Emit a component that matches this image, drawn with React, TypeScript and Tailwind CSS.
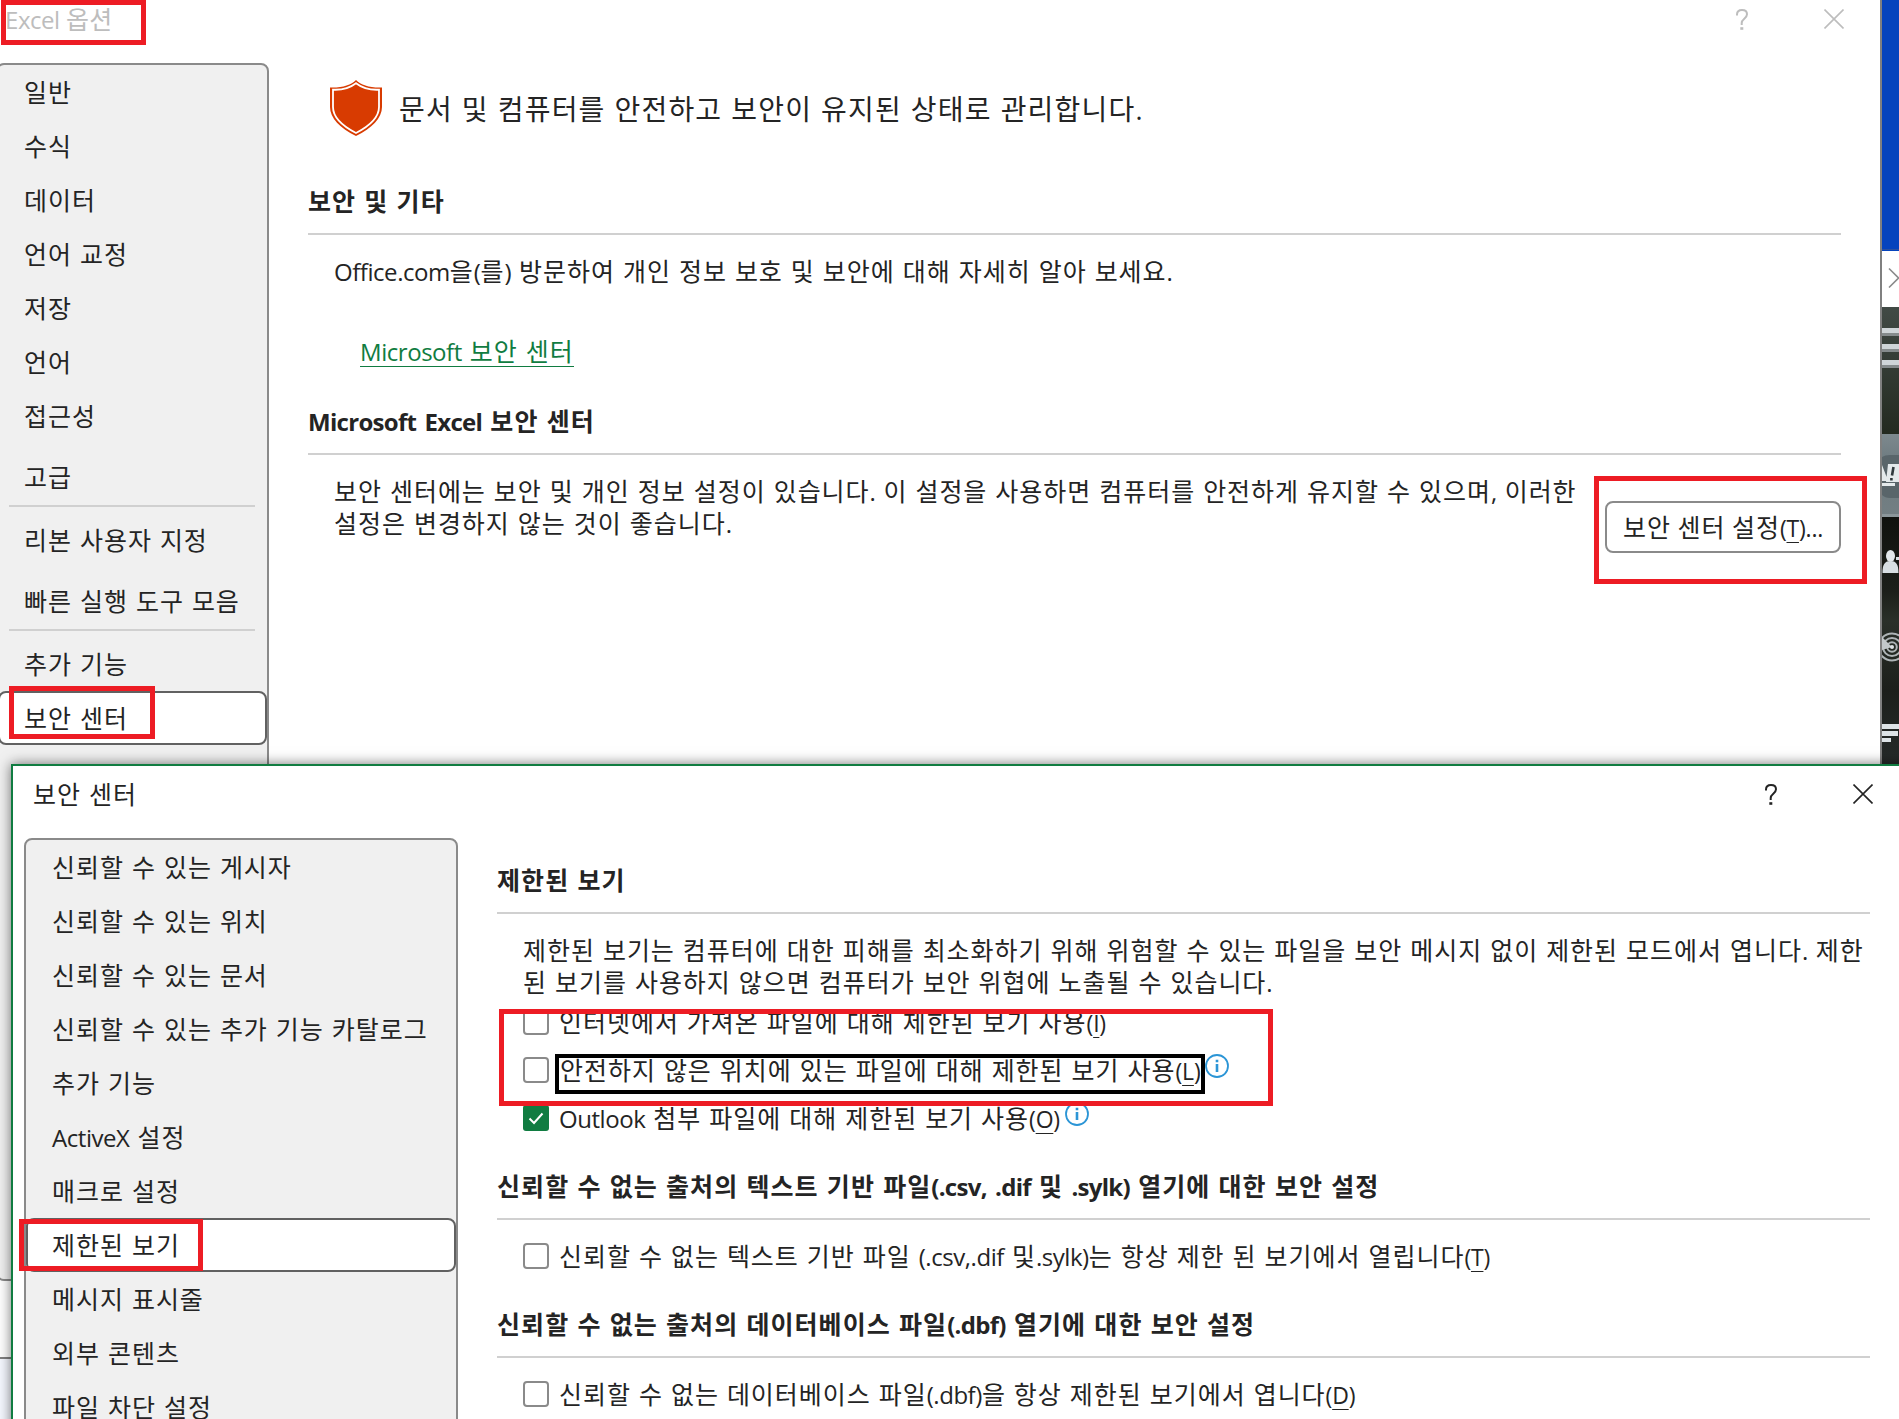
import React from "react"
import clsx from "clsx"

const LATIN_RUN = /([A-Za-z0-9.,()?]+)/

/**
 * T - Splits mixed text so latin runs use their own face and tracking
 */
const T: React.FC<{ children: string; bold?: boolean }> = ({ children, bold }) => (
	<>
		{children.split(LATIN_RUN).map((part, i) =>
			i % 2 === 1 ? (
				<span
					key={i}
					className={clsx(
						"font-['Open_Sans',sans-serif] text-[0.96em] leading-none",
						bold ? "tracking-[-0.7px]" : "tracking-[-0.45px]",
					)}>
					{part}
				</span>
			) : (
				part
			),
		)}
	</>
)

/** Access key such as (T), with the letter underlined */
const AccessKey: React.FC<{ letter: string; suffix?: string }> = ({ letter, suffix = "" }) => (
	<span className="font-['Open_Sans',sans-serif] text-[23px] leading-none tracking-[-0.2px]">
		(<span className="underline decoration-1 underline-offset-[5px]">{letter}</span>){suffix}
	</span>
)

const CloseIcon: React.FC<{ className?: string }> = ({ className }) => (
	<svg viewBox="0 0 20 20" className={clsx("h-5 w-5", className)} fill="none" stroke="currentColor" strokeWidth="1.6">
		<path d="M0.5 0.5 19.5 19.5M19.5 0.5 0.5 19.5" />
	</svg>
)

const HelpIcon: React.FC<{ className?: string }> = ({ className }) => (
	<svg viewBox="0 0 12 21" className={clsx("h-[21px] w-3", className)} fill="none" stroke="currentColor" strokeWidth="2">
		<path d="M1 6.500V5.500C1 2.500 3.200 1 6 1S11 2.500 11 5.300C11 9.500 5.700 10 5.700 14V16" />
		<path d="M4.300 19.500H7.300" strokeWidth="2.600" />
	</svg>
)

const ShieldIcon = () => (
	<svg viewBox="0 0 52 56" className="h-14 w-[52px]">
		<path d="M26 0C31 5 40 8 52 7.500V27C52 38 42 48 26 56C10 48 0 38 0 27V7.500C12 8 21 5 26 0Z" fill="#d83b01" />
		<path
			d="M26 3.200C32 7.800 40 10.200 49 9.700V27C49 36 40.500 45.500 26 53C11.500 45.500 3 36 3 27V9.700C12 10.200 20 7.800 26 3.200Z"
			fill="none"
			stroke="#fff"
			strokeWidth="1.800"
		/>
	</svg>
)

const InfoIcon = () => (
	<svg viewBox="0 0 24 24" className="h-6 w-6" fill="none" stroke="#2b95d6">
		<circle cx="12" cy="12" r="11" strokeWidth="1.800" />
		<path d="M12 10V18M12 5.800V8.200" strokeWidth="2.600" />
	</svg>
)

const CheckBox: React.FC<{ checked?: boolean }> = ({ checked }) =>
	checked ? (
		<svg viewBox="0 0 26 26" className="h-[26px] w-[26px] shrink-0">
			<rect width="26" height="26" rx="3" fill="#107c41" />
			<path d="M6.500 13.500 11 18 19.500 8.500" fill="none" stroke="#fff" strokeWidth="2" />
		</svg>
	) : (
		<span className="h-[26px] w-[26px] shrink-0 rounded-[4px] border-2 border-[#8a8a8a] bg-white" />
	)

const NavItem: React.FC<{ label: string; selected?: boolean; className?: string }> = ({
	label,
	selected,
	className,
}) => (
	<div
		className={clsx(
			"flex h-[54px] shrink-0 items-center whitespace-pre pb-px",
			selected ? "rounded-[8px] border-2 border-[#616161] bg-white" : "border-2 border-transparent",
			className,
		)}>
		<span>
			<T>{label}</T>
		</span>
	</div>
)

const SectionTitle: React.FC<{ children: string }> = ({ children }) => (
	<div className="h-[50px] border-b-2 border-[#d0d0d0] font-bold leading-[30px] tracking-[1.07px]">
		<T bold>{children}</T>
	</div>
)

const Marker: React.FC<{ className: string }> = ({ className }) => (
	<div className={clsx("pointer-events-none absolute border-[5px] border-[#ed1c24]", className)} />
)

/** Sliver of the desktop that shows to the right of the options window */
const DesktopEdge = () => (
	<svg viewBox="0 0 17 764" className="h-[764px] w-[17px] shrink-0">
		<defs>
			<linearGradient id="hill" x1="0" y1="0" x2="0" y2="1">
				<stop offset="0" stopColor="#414a45" />
				<stop offset="0.45" stopColor="#343c35" />
				<stop offset="1" stopColor="#232a20" />
			</linearGradient>
			<linearGradient id="band" x1="0" y1="0" x2="0" y2="1">
				<stop offset="0" stopColor="#7d898e" />
				<stop offset="0.35" stopColor="#6d7a7f" />
				<stop offset="1" stopColor="#737f83" />
			</linearGradient>
			<linearGradient id="ground" x1="0" y1="0" x2="0" y2="1">
				<stop offset="0" stopColor="#10120e" />
				<stop offset="0.3" stopColor="#1c1f1a" />
				<stop offset="0.42" stopColor="#2a3029" />
				<stop offset="0.7" stopColor="#1c1f1b" />
				<stop offset="1" stopColor="#252a29" />
			</linearGradient>
		</defs>
		<rect width="17" height="251" fill="#0543bd" />
		<rect y="249" width="17" height="1" fill="#2b50a0" />
		<rect y="251" width="17" height="56" fill="#fff" />
		<path d="M7 268.500 16.500 278 7 287.500" fill="none" stroke="#8a8a8a" strokeWidth="1.600" />
		<rect y="307" width="17" height="127" fill="url(#hill)" />
		{[328, 344, 360].map((y) => (
			<g key={y}>
				<rect y={y} width="17" height="5" fill="#cfd5d8" />
				<rect y={y + 5} width="17" height="3" fill="#858b8c" />
			</g>
		))}
		<rect y="434" width="17" height="83" fill="url(#band)" />
		<path d="M0 457Q3 455 8 455H17V498H8Q3 498 0 495Z" fill="#59656a" />
		<path d="M0 465 5 478V481H0ZM6 464H17V482H4Z" fill="#e4e9eb" />
		<path d="M0 483H13V486H0Z" fill="#e4e9eb" />
		<path d="M11.500 467 10 475.500M9.400 478V480.500" stroke="#30393d" strokeWidth="2.600" />
		<rect y="514" width="17" height="3" fill="#8b969a" />
		<rect y="517" width="17" height="247" fill="url(#ground)" />
		<ellipse cx="8.500" cy="556" rx="4.500" ry="6" fill="#e2e7ea" />
		<path d="M0.500 573C0.500 564 3 561 8.500 561S16.500 564 16.500 573ZM14 557H17V560H14Z" fill="#d8dfe3" />
		<g fill="none" stroke="#aeb4b6" strokeWidth="2">
			<circle cx="10" cy="647" r="13.500" />
			<circle cx="10" cy="647" r="9" />
			<circle cx="10" cy="647" r="4.800" />
		</g>
		<path d="M10 647 0 637V650Z" fill="#c3c9cb" />
		<circle cx="10" cy="647" r="2" fill="#dde2e4" />
		<path d="M0 724H17V729H0ZM0 731H16V736H0ZM0 738H9V742H0Z" fill="#dde3e6" />
	</svg>
)

const ExcelOptions = () => (
	<div className="flex h-[1357px]">
		<div className="flex w-[1882px] shrink-0 flex-col border-r-2 border-[#808080] bg-white">
			<header className="flex h-[63px] shrink-0 items-start justify-between pl-[5px] pr-9 text-[#bdbdbd]">
				<span className="leading-[37px] tracking-[0.2px] [word-spacing:0.5px]">
					<T>Excel 옵션</T>
				</span>
				<div className="flex gap-[76px] pt-[9px]">
					<HelpIcon />
					<CloseIcon />
				</div>
			</header>
			<div className="flex">
				<nav className="-ml-1 flex h-[1218px] w-[273px] shrink-0 flex-col rounded-[8px] border-2 border-[#8a8a8a] bg-[#f0f0f0]">
					{["일반", "수식", "데이터", "언어 교정", "저장", "언어", "접근성"].map((label) => (
						<NavItem key={label} label={label} className="pl-6" />
					))}
					<NavItem label="고급" className="mt-[7px] pl-6" />
					<hr className="ml-[11px] mr-3 mt-px border-t-2 border-[#d0d0d0]" />
					<NavItem label="리본 사용자 지정" className="mt-1.5 pl-6" />
					<NavItem label="빠른 실행 도구 모음" className="mt-[7px] pl-6" />
					<hr className="ml-[11px] mr-3 mt-px border-t-2 border-[#d0d0d0]" />
					<NavItem label="추가 기능" className="mt-1.5 pl-6" />
					<NavItem label="보안 센터" selected className="pl-6" />
				</nav>
				<main className="ml-[39px] flex w-[1533px] shrink-0 flex-col">
					<div className="ml-[22px] mt-[17px] flex h-14 items-center gap-[17px]">
						<ShieldIcon />
						<span className="whitespace-pre text-[28px] leading-[32px] tracking-[1.2px]">
							<T>문서 및 컴퓨터를 안전하고 보안이 유지된 상태로 관리합니다.</T>
						</span>
					</div>
					<div className="mt-[49px]">
						<SectionTitle>보안 및 기타</SectionTitle>
					</div>
					<p className="ml-[26px] mt-[19px] leading-[32px]">
						<T>Office.com을(를) 방문하여 개인 정보 보호 및 보안에 대해 자세히 알아 보세요.</T>
					</p>
					<a className="ml-[52px] mt-[48px] h-[33px] self-start border-b border-[#107c41] leading-[32px] text-[#107c41]">
						<T>Microsoft 보안 센터</T>
					</a>
					<div className="mt-[38px]">
						<SectionTitle>Microsoft Excel 보안 센터</SectionTitle>
					</div>
					<div className="ml-[26px] flex justify-between">
						<p className="mt-[19px] whitespace-pre leading-[32px]">
							<T>보안 센터에는 보안 및 개인 정보 설정이 있습니다. 이 설정을 사용하면 컴퓨터를 안전하게 유지할 수 있으며, 이러한</T>
							<br />
							<T>설정은 변경하지 않는 것이 좋습니다.</T>
						</p>
						<button className="mt-[46px] flex h-[52px] w-[236px] items-center justify-center whitespace-pre rounded-[8px] border-2 border-[#8a8a8a] pb-px">
							<span>
								보안 센터 설정
								<AccessKey letter="T" suffix="..." />
							</span>
						</button>
					</div>
				</main>
			</div>
		</div>
		<DesktopEdge />
	</div>
)

const CheckRow: React.FC<{ label: string; letter: string; checked?: boolean; focused?: boolean; info?: boolean }> = ({
	label,
	letter,
	checked,
	focused,
	info,
}) => (
	<div className="ml-[26px] flex h-12 items-start">
		<CheckBox checked={checked} />
		<span
			className={clsx(
				"whitespace-pre",
				focused
					? "-mt-[3px] ml-1.5 h-10 w-[650px] border-4 border-black px-px leading-[23px]"
					: "-mt-[3px] ml-2.5 leading-[30px]",
			)}>
			<T>{label}</T>
			<AccessKey letter={letter} />
		</span>
		{info && (
			<span className={clsx("-mt-[3px]", !focused && "ml-[5px]")}>
				<InfoIcon />
			</span>
		)}
	</div>
)

const TRUST_NAV = [
	"신뢰할 수 있는 게시자",
	"신뢰할 수 있는 위치",
	"신뢰할 수 있는 문서",
	"신뢰할 수 있는 추가 기능 카탈로그",
	"추가 기능",
	"ActiveX 설정",
	"매크로 설정",
	"제한된 보기",
	"메시지 표시줄",
	"외부 콘텐츠",
	"파일 차단 설정",
]

const TrustCenter = () => (
	<div className="absolute left-[11px] top-[764px] h-[700px] w-[1920px] border-2 border-[#107c41] bg-white shadow-[0_0_12px_rgba(0,0,0,0.55)]">
		<header className="flex h-[72px] items-start justify-between pl-5 pr-14">
			<span className="leading-[54px]">보안 센터</span>
			<div className="flex gap-[76px] pt-[18px]">
				<HelpIcon />
				<CloseIcon />
			</div>
		</header>
		<div className="flex">
			<nav className="ml-[11px] flex h-[700px] w-[434px] shrink-0 flex-col rounded-[8px] border-2 border-[#8a8a8a] bg-[#f0f0f0]">
				{TRUST_NAV.map((label) => (
					<NavItem key={label} label={label} selected={label === "제한된 보기"} className="pl-6" />
				))}
			</nav>
			<main className="ml-[39px] mt-[26px] w-[1373px] shrink-0">
				<SectionTitle>제한된 보기</SectionTitle>
				<p className="ml-[26px] mt-[19px] h-[76px] whitespace-pre leading-[32px]">
					<T>제한된 보기는 컴퓨터에 대한 피해를 최소화하기 위해 위험할 수 있는 파일을 보안 메시지 없이 제한된 모드에서 엽니다. 제한</T>
					<br />
					<T>된 보기를 사용하지 않으면 컴퓨터가 보안 위협에 노출될 수 있습니다.</T>
				</p>
				<CheckRow label="인터넷에서 가져온 파일에 대해 제한된 보기 사용" letter="I" />
				<CheckRow label="안전하지 않은 위치에 있는 파일에 대해 제한된 보기 사용" letter="L" focused info />
				<CheckRow label="Outlook 첨부 파일에 대해 제한된 보기 사용" letter="O" checked info />
				<div className="mt-[17px]">
					<SectionTitle>신뢰할 수 없는 출처의 텍스트 기반 파일(.csv, .dif 및 .sylk) 열기에 대한 보안 설정</SectionTitle>
				</div>
				<div className="mt-[23px]">
					<CheckRow label="신뢰할 수 없는 텍스트 기반 파일 (.csv,.dif 및.sylk)는 항상 제한 된 보기에서 열립니다" letter="T" />
				</div>
				<div className="mt-[17px]">
					<SectionTitle>신뢰할 수 없는 출처의 데이터베이스 파일(.dbf) 열기에 대한 보안 설정</SectionTitle>
				</div>
				<div className="mt-[23px]">
					<CheckRow label="신뢰할 수 없는 데이터베이스 파일(.dbf)을 항상 제한된 보기에서 엽니다" letter="D" />
				</div>
			</main>
		</div>
	</div>
)

const App = () => (
	<div className="relative h-[1419px] w-[1899px] overflow-hidden bg-[#f5f8ff] font-['Noto_Sans_CJK_KR',sans-serif] text-[25px] tracking-[0.97px] text-[#242424] [word-spacing:1.45px]">
		<div className="border-b-2 border-[#808080]">
			<ExcelOptions />
		</div>
		<TrustCenter />
		<Marker className="left-px top-0 h-[45px] w-[145px]" />
		<Marker className="left-[9px] top-[686px] h-[53px] w-[146px]" />
		<Marker className="left-[1594px] top-[476px] h-[108px] w-[273px]" />
		<Marker className="left-[19px] top-[1219px] h-[52px] w-[184px]" />
		<Marker className="left-[499px] top-[1009px] h-[97px] w-[774px]" />
	</div>
)

export default App
